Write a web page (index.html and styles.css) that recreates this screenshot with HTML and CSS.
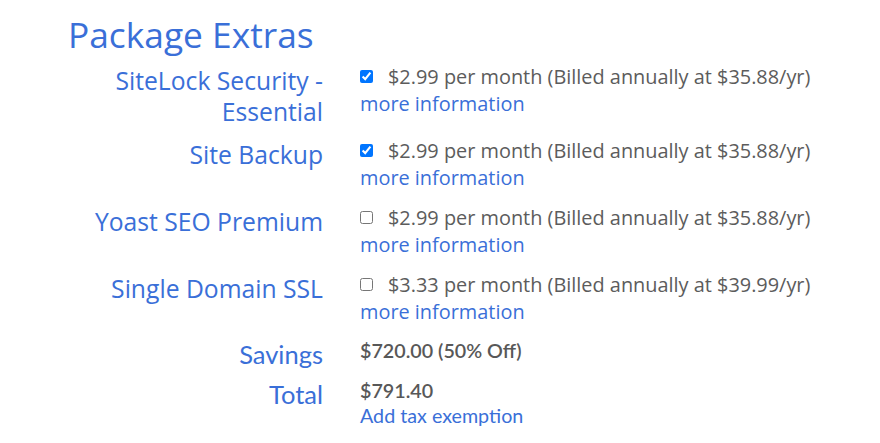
FILE: index.html
```html
<!DOCTYPE html>
<html lang="en">
<head>
<meta charset="utf-8">
<title>Package Extras</title>
<link rel="stylesheet" href="styles.css">
</head>
<body>
<div class="extras">
  <h2 class="title">Package Extras</h2>
  <div class="grid">
    <div class="label">SiteLock Security - Essential</div>
    <div class="value">
      <label class="opt"><input type="checkbox" checked><span>$2.99 per month (Billed annually at $35.88/yr)</span></label>
      <a class="link" href="#">more information</a>
    </div>

    <div class="label">Site Backup</div>
    <div class="value">
      <label class="opt"><input type="checkbox" checked><span>$2.99 per month (Billed annually at $35.88/yr)</span></label>
      <a class="link" href="#">more information</a>
    </div>

    <div class="label">Yoast SEO Premium</div>
    <div class="value">
      <label class="opt"><input type="checkbox"><span>$2.99 per month (Billed annually at $35.88/yr)</span></label>
      <a class="link" href="#">more information</a>
    </div>

    <div class="label">Single Domain SSL</div>
    <div class="value">
      <label class="opt"><input type="checkbox"><span>$3.33 per month (Billed annually at $39.99/yr)</span></label>
      <a class="link" href="#">more information</a>
    </div>

    <div class="label label-alt">Savings</div>
    <div class="value value-alt">
      <span class="amount">$720.00 (50% Off)</span>
    </div>

    <div class="label label-alt">Total</div>
    <div class="value value-alt">
      <span class="amount">$791.40</span>
      <a class="link link-alt" href="#">Add tax exemption</a>
    </div>
  </div>
</div>
</body>
</html>
```

FILE: styles.css
```css
html, body {
  margin: 0;
  padding: 0;
  background: #ffffff;
}

body {
  font-family: "Open Sans", "Liberation Sans", sans-serif;
  color: #5c5c5c;
}

.extras {
  padding: 13px 0 0 68px;
}

.title {
  margin: 0;
  font-size: 35.3px;
  font-weight: 400;
  line-height: 42px;
  color: #3a6fd8;
}

.grid {
  display: grid;
  grid-template-columns: 255px 1fr;
  column-gap: 37px;
  row-gap: 13px;
  margin-top: 8px;
}

.label {
  text-align: right;
  font-size: 24.7px;
  line-height: 31px;
  padding-top: 2px;
  margin-bottom: -3px;
  color: #3a6fd8;
}

.value {
  display: flex;
  flex-direction: column;
  align-items: flex-start;
  font-size: 19.9px;
  line-height: 27px;
}

.opt {
  display: flex;
  align-items: center;
}

.opt input {
  width: 13px;
  height: 13px;
  margin: 0 15px 0 0;
}

.link {
  color: #3a6fd8;
  text-decoration: none;
}

.label-alt {
  font-family: "Lato", "Open Sans", sans-serif;
  font-size: 25.5px;
  line-height: 26px;
  padding-top: 3px;
  margin-bottom: -2px;
}

.value-alt {
  font-family: "Lato", "Open Sans", sans-serif;
  font-size: 19.7px;
  line-height: 26px;
}

.amount {
  font-weight: 600;
  color: #585858;
}

.link-alt {
  font-size: 19.7px;
  line-height: 24px;
}
```
